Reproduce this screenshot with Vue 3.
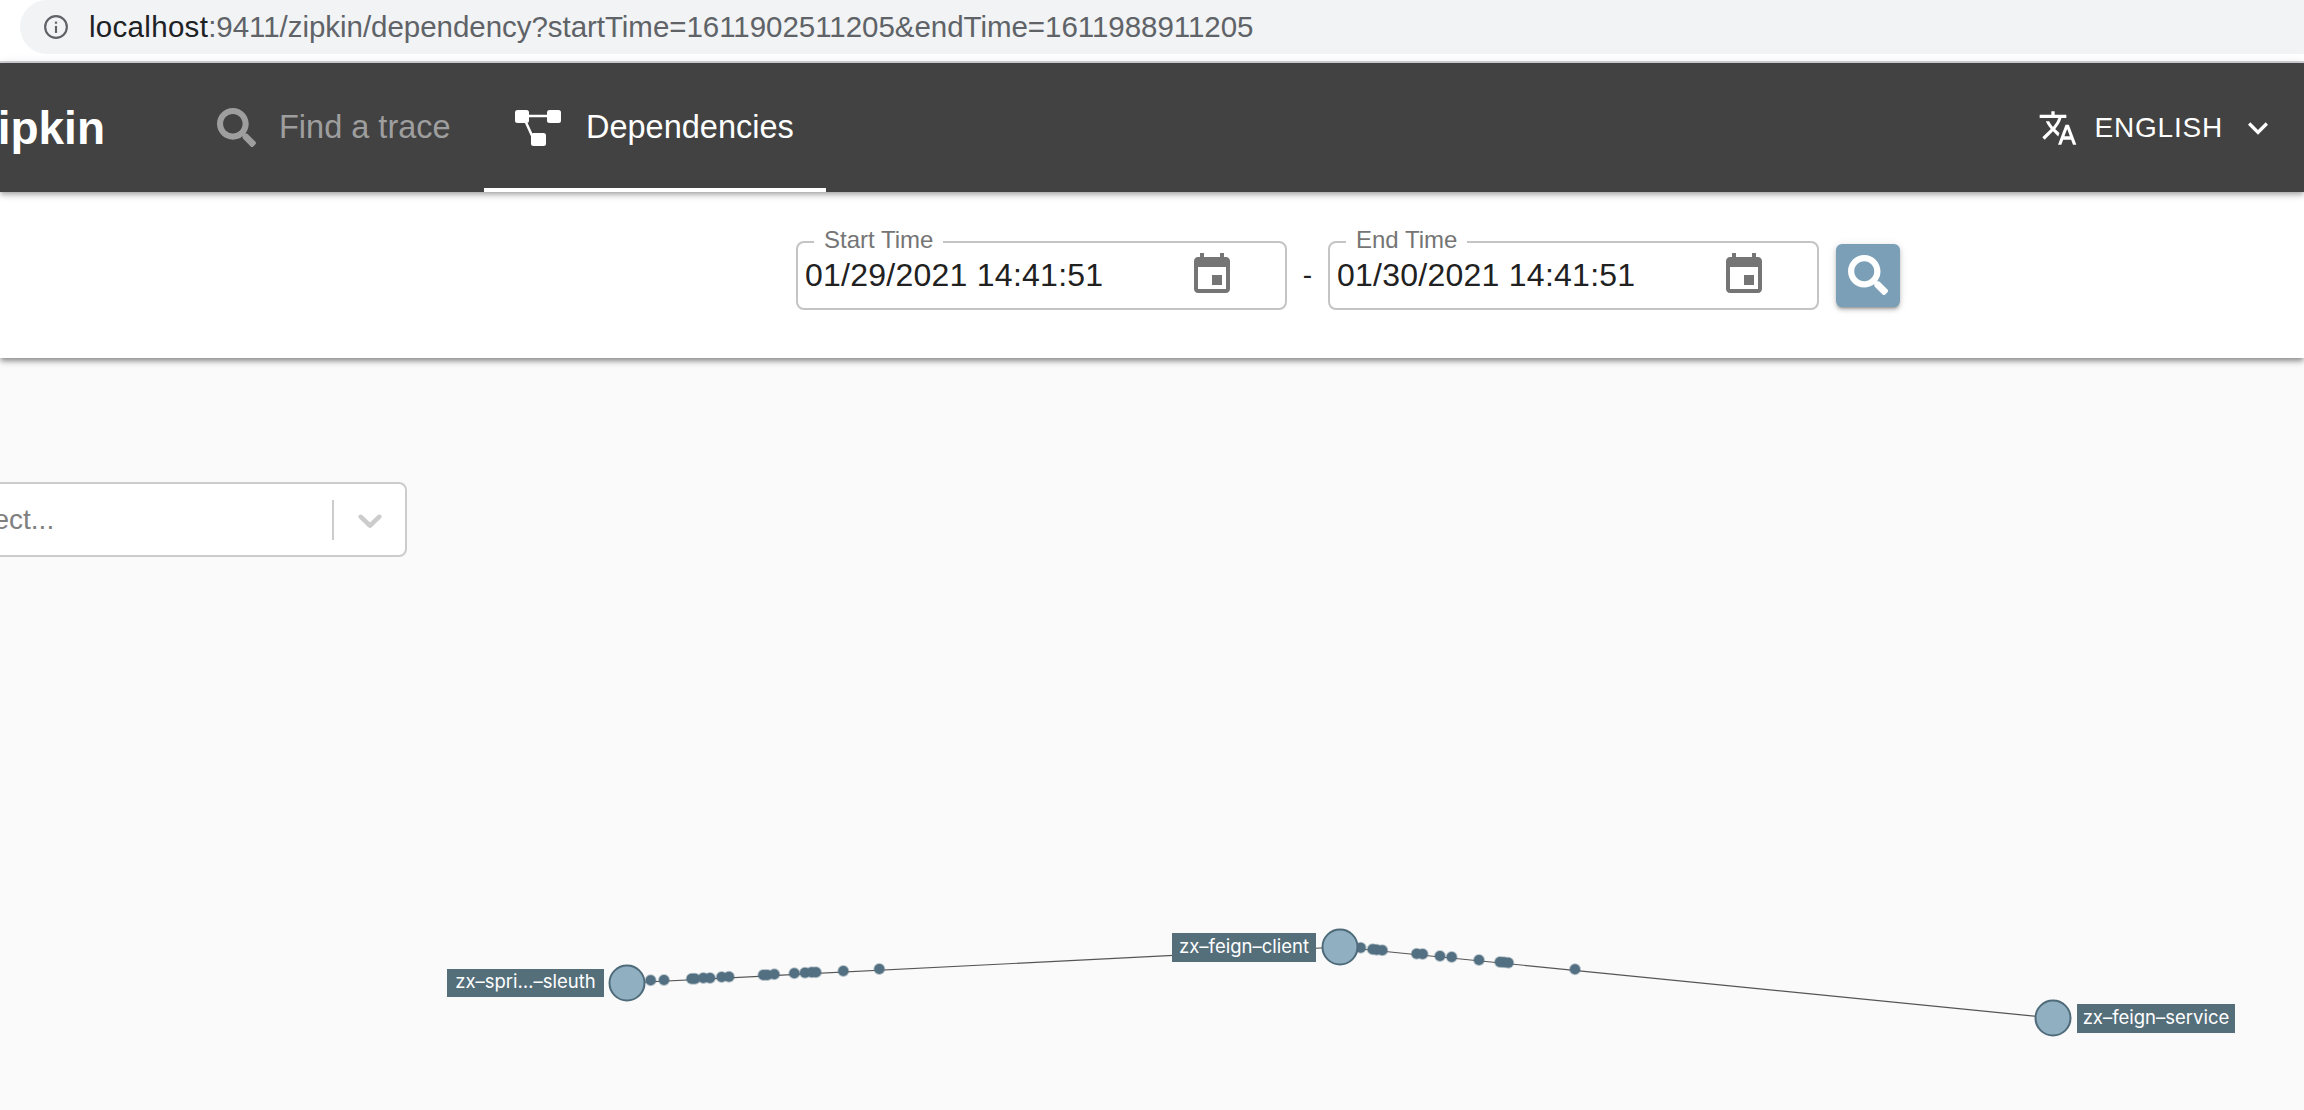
<script setup>
const edges = [
  { x1: 627, y1: 983, x2: 1340, y2: 947 },
  { x1: 1340, y1: 947, x2: 2053, y2: 1018 }
]
const toDots = (pts, ox, oy) => pts.map(([x, y]) => ({ x: x / 3 + ox, y: y / 3 + oy }))
const dots = [
  ...toDots([[662,181],[702,180],[785,176],[795,176],[820,174],[840,174],[875,171],[897,170],[1000,165],[1012,165],[1033,163],[1093,160],[1125,158],[1145,157],[1158,157],[1240,153],[1348,147]], 430, 920),
  ...toDots([[632,113],[668,118],[680,119],[697,121],[800,131],[818,132],[870,138],[905,141],[987,150],[1050,156],[1062,157],[1075,158],[1275,178]], 1150, 910)
]
const nodes = [
  { cx: 627, cy: 983, rx: 447, ry: 969, rw: 157, rh: 28, label: 'zx–spri…–sleuth' },
  { cx: 1340, cy: 947, rx: 1172, ry: 933, rw: 144, rh: 29, label: 'zx–feign–client' },
  { cx: 2053, cy: 1018, rx: 2077, ry: 1004, rw: 158, rh: 29, label: 'zx–feign–service' }
]
const searchPath = 'M505 442.7L405.3 343c-4.5-4.5-10.6-7-17-7H372c27.6-35.3 44-79.7 44-128C416 93.1 322.9 0 208 0S0 93.1 0 208s93.1 208 208 208c48.3 0 92.7-16.4 128-44v16.3c0 6.4 2.5 12.5 7 17l99.7 99.7c9.4 9.4 24.6 9.4 33.9 0l28.3-28.3c9.4-9.4 9.4-24.6.1-34zM208 336c-70.7 0-128-57.2-128-128 0-70.7 57.2-128 128-128 70.7 0 128 57.2 128 128 0 70.7-57.2 128-128 128z'
const calendarPath = 'M17 12h-5v5h5v-5zM16 1v2H8V1H6v2H5c-1.11 0-1.99.9-1.99 2L3 19c0 1.1.89 2 2 2h14c1.1 0 2-.9 2-2V5c0-1.1-.9-2-2-2h-1V1h-2zm3 18H5V8h14v11z'
const fields = [
  { label: 'Start Time', value: '01/29/2021 14:41:51' },
  { label: 'End Time', value: '01/30/2021 14:41:51' }
]
</script>

<template>
  <div class="page">
    <div class="browser">
      <div class="url">
        <svg class="info" viewBox="0 0 24 24" width="26" height="26">
          <circle cx="12" cy="12" r="10" fill="none" stroke="#5f6368" stroke-width="2" />
          <rect x="11" y="11" width="2" height="6.5" fill="#5f6368" />
          <rect x="11" y="7" width="2" height="2" fill="#5f6368" />
        </svg>
        <span class="host">localhost</span><span class="rest">:9411/zipkin/dependency?startTime=1611902511205&amp;endTime=1611988911205</span>
      </div>
    </div>

    <header class="appbar">
      <div class="logo"><span>zipkin</span></div>
      <div class="tab muted">
        <svg class="tab-search" viewBox="0 0 512 512"><path :d="searchPath" fill="currentColor" /></svg>
        <span>Find a trace</span>
      </div>
      <div class="tab active">
        <svg class="tab-dep" viewBox="0 0 46 36">
          <path d="M7 6H40M9 8L19 30" fill="none" stroke="#fff" stroke-width="2.5" />
          <rect x="0" y="0" width="14" height="13" rx="2.5" fill="#fff" />
          <rect x="32" y="0" width="14" height="13" rx="2.5" fill="#fff" />
          <rect x="16" y="23" width="15" height="13" rx="2.5" fill="#fff" />
        </svg>
        <span>Dependencies</span>
      </div>
      <div class="lang">
        <svg viewBox="0 0 24 24" width="40" height="40"><path fill="#fff" d="M12.87 15.07l-2.54-2.51.03-.03c1.74-1.94 2.98-4.17 3.71-6.53H17V4h-7V2H8v2H1v1.99h11.17C11.5 7.92 10.44 9.75 9 11.35 8.07 10.32 7.3 9.19 6.69 8h-2c.73 1.63 1.73 3.17 2.98 4.56l-5.09 5.02L4 19l5-5 3.11 3.11.76-2.04zM18.5 10h-2L12 22h2l1.12-3h4.75L21 22h2l-4.5-12zm-2.62 7l1.62-4.33L19.12 17h-3.24z" /></svg>
        <span class="lang-text">ENGLISH</span>
        <svg viewBox="0 0 24 24" width="40" height="40"><path fill="#fff" d="M16.59 8.59L12 13.17 7.41 8.59 6 10l6 6 6-6z" /></svg>
      </div>
    </header>

    <section class="toolbar">
      <template v-for="(f, i) in fields" :key="f.label">
        <span v-if="i === 1" class="dash">-</span>
        <div class="field">
          <span class="legend">{{ f.label }}</span>
          <span class="value">{{ f.value }}</span>
          <svg class="cal" viewBox="0 0 24 24" width="48" height="48"><path fill="#757575" :d="calendarPath" /></svg>
        </div>
      </template>
      <button class="go" type="button">
        <svg viewBox="0 0 512 512" width="40" height="40"><path fill="#fff" :d="searchPath" /></svg>
      </button>
    </section>

    <main class="main">
      <svg class="graph" viewBox="0 0 2304 1110" width="2304" height="1110">
        <line v-for="(e, i) in edges" :key="'e' + i" :x1="e.x1" :y1="e.y1" :x2="e.x2" :y2="e.y2" stroke="#555" stroke-width="1.2" />
        <circle v-for="(d, i) in dots" :key="'d' + i" :cx="d.x" :cy="d.y" r="5" fill="#537082" stroke="#537082" stroke-opacity="0.4" stroke-width="2" />
        <g v-for="n in nodes" :key="n.label">
          <rect :x="n.rx" :y="n.ry" :width="n.rw" :height="n.rh" fill="#546e7a" />
          <text class="node-label" :x="n.rx + n.rw / 2" :y="n.ry + n.rh / 2 + 5" text-anchor="middle">{{ n.label }}</text>
          <circle :cx="n.cx" :cy="n.cy" r="17.5" fill="#90b0c2" stroke="#4f6b7a" stroke-width="2" />
        </g>
      </svg>
      <div class="select">
        <span class="placeholder">Select...</span>
        <span class="sep"></span>
        <svg class="chev" viewBox="0 0 20 20" width="40" height="40"><path fill="#ccc" d="M4.516 7.548c0.436-0.446 1.043-0.481 1.576 0l3.908 3.747 3.908-3.747c0.533-0.481 1.141-0.446 1.574 0 0.436 0.445 0.408 1.197 0 1.615-0.406 0.418-4.695 4.502-4.695 4.502-0.217 0.223-0.502 0.335-0.787 0.335s-0.57-0.112-0.789-0.335c0 0-4.287-4.084-4.695-4.502s-0.436-1.17 0-1.615z" /></svg>
      </div>
    </main>
  </div>
</template>

<style>
html, body { margin: 0; overflow: hidden; }
</style>

<style scoped>
.page {
  width: 2304px;
  height: 1110px;
  overflow: hidden;
  display: flex;
  flex-direction: column;
  background: #fafafa;
  font-family: "Liberation Sans", Arial, sans-serif;
}
.browser {
  height: 63px;
  box-sizing: border-box;
  flex: none;
  background: #fff;
  border-bottom: 2px solid #d4d4d8;
  overflow: hidden;
}
.url {
  height: 54px;
  margin: 0 -40px 0 20px;
  padding-left: 23px;
  box-sizing: border-box;
  display: flex;
  align-items: center;
  background: #f1f3f4;
  border-radius: 27px 0 0 27px;
  font-size: 29.5px;
  white-space: nowrap;
}
.info { margin-right: 20px; flex: none; }
.host { color: #202124; letter-spacing: 0.3px; }
.rest { color: #5f6368; letter-spacing: -0.04px; }
.appbar {
  position: relative;
  z-index: 2;
  flex: none;
  height: 129px;
  display: flex;
  align-items: stretch;
  background: #424242;
  color: #fff;
  box-shadow: 0 2px 4px -1px rgba(0,0,0,.2), 0 4px 5px rgba(0,0,0,.14), 0 1px 10px rgba(0,0,0,.12);
}
.logo {
  width: 105px;
  margin-right: 81px;
  display: flex;
  align-items: center;
  justify-content: flex-end;
  overflow: hidden;
  font-size: 46px;
  font-weight: 700;
  white-space: nowrap;
}
.tab {
  display: flex;
  align-items: center;
  box-sizing: border-box;
  padding: 0 33px 0 31px;
  font-size: 32.5px;
  white-space: nowrap;
}
.muted { color: #9e9e9e; width: 298px; }
.tab-search { width: 39px; height: 39px; margin-right: 23px; flex: none; }
.active { border-bottom: 4px solid #fff; padding-top: 4px; width: 342px; }
.tab-dep { width: 46px; height: 36px; margin-right: 25px; flex: none; }
.lang {
  margin-left: auto;
  padding-right: 26px;
  display: flex;
  align-items: center;
}
.lang-text {
  margin: 0 15px 0 16px;
  font-size: 28px;
  letter-spacing: 0.8px;
}
.toolbar {
  position: relative;
  z-index: 1;
  flex: none;
  height: 166px;
  padding-left: 796px;
  display: flex;
  align-items: center;
  background: #fff;
  box-shadow: 0 3px 5px -1px rgba(0,0,0,.3), 0 4px 6px rgba(0,0,0,.16), 0 1px 10px rgba(0,0,0,.1);
}
.field {
  position: relative;
  width: 491px;
  height: 69px;
  box-sizing: border-box;
  padding: 0 49px 0 7px;
  display: flex;
  align-items: center;
  justify-content: space-between;
  border: 2px solid #c4c4c4;
  border-radius: 8px;
}
.legend {
  position: absolute;
  left: 16px;
  top: -17px;
  padding: 0 10px;
  background: #fff;
  color: #757575;
  font-size: 24px;
  line-height: 28px;
}
.value {
  font-size: 32px;
  color: #212121;
  letter-spacing: 0.25px;
}
.cal { flex: none; }
.dash {
  width: 41px;
  text-align: center;
  font-size: 28px;
  color: #212121;
}
.go {
  width: 64px;
  height: 63px;
  margin-left: 17px;
  padding: 0;
  border: 0;
  border-radius: 6px;
  display: flex;
  align-items: center;
  justify-content: center;
  background: #7a9fb6;
  box-shadow: 0 3px 3px -2px rgba(0,0,0,.3), 0 3px 4px rgba(0,0,0,.16), 0 1px 8px rgba(0,0,0,.12);
}
.main {
  position: relative;
  flex: 1;
  padding-top: 124px;
}
.graph {
  position: absolute;
  left: 0;
  top: -358px;
}
.node-label {
  font-family: Inter, "Liberation Sans", sans-serif;
  font-size: 18.5px;
  fill: #fff;
}
.select {
  position: relative;
  width: 447px;
  height: 75px;
  margin-left: -40px;
  box-sizing: border-box;
  padding-right: 15px;
  display: flex;
  align-items: center;
  background: #fff;
  border: 2px solid #ccc;
  border-radius: 8px;
}
.placeholder {
  flex: 1;
  text-align: left;
  margin-left: -9px;
  font-size: 28px;
  color: #808080;
  white-space: nowrap;
}
.sep {
  width: 2px;
  height: 40px;
  margin-right: 16px;
  background: #ccc;
}
.chev { flex: none; }
</style>
